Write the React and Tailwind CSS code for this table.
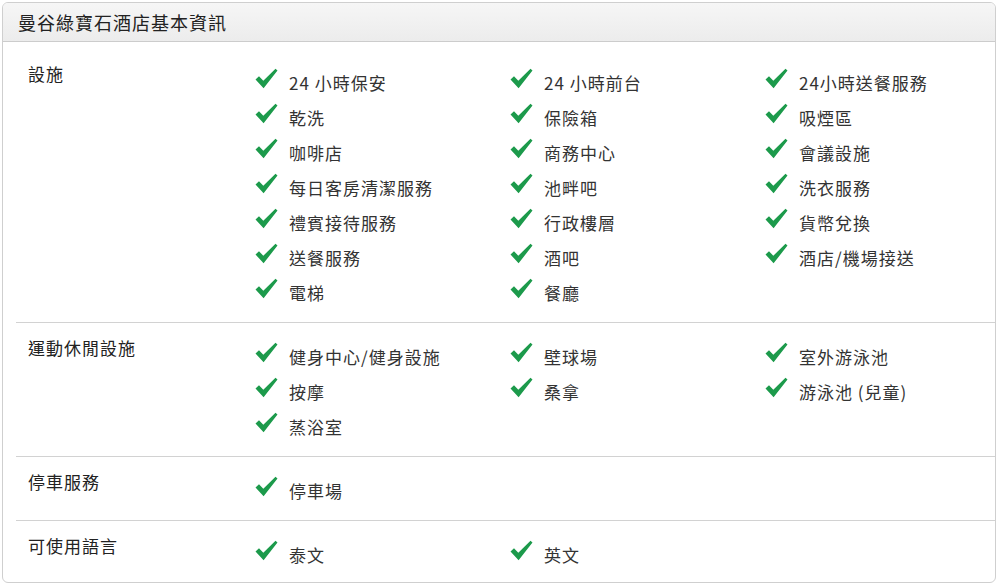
const sections = [
  {
    label: '設施',
    items: [
      '24 小時保安', '24 小時前台', '24小時送餐服務',
      '乾洗', '保險箱', '吸煙區',
      '咖啡店', '商務中心', '會議設施',
      '每日客房清潔服務', '池畔吧', '洗衣服務',
      '禮賓接待服務', '行政樓層', '貨幣兌換',
      '送餐服務', '酒吧', '酒店/機場接送',
      '電梯', '餐廳',
    ],
  },
  {
    label: '運動休閒設施',
    items: ['健身中心/健身設施', '壁球場', '室外游泳池', '按摩', '桑拿', '游泳池 (兒童)', '蒸浴室'],
  },
  { label: '停車服務', items: ['停車場'] },
  { label: '可使用語言', items: ['泰文', '英文'] },
];

function Check() {
  return (
    <svg width="23" height="21" viewBox="0 0 23 21" className="shrink-0 mb-[8px]">
      <path d="M0.5 11.5 L4 8.2 L8.3 12.8 L20.5 0.8 L22.5 2.6 L8.6 20.2 Z" fill="#1c9a4b" />
    </svg>
  );
}

export default function App() {
  return (
    <div
      className="w-[994px] m-[2px] border border-[#cfcfcf] rounded-[6px] bg-white overflow-hidden text-[#333]"
      style={{ fontFamily: '"Noto Sans CJK TC", "Liberation Sans", sans-serif' }}
    >
      <div className="h-[39px] flex items-center pl-[15px] bg-gradient-to-b from-[#f6f6f6] to-[#ececec] border-b border-[#cccccc]">
        <span className="text-[18px] tracking-[1px] text-[#222]">曼谷綠寶石酒店基本資訊</span>
      </div>
      <div className="pt-[7px] pl-[13px]">
        {sections.map((s, i) => (
          <div
            key={s.label}
            className={`flex pt-[16px] ${i < sections.length - 1 ? 'pb-[12px] border-b border-[#d2d2d2]' : 'pb-[10px]'}`}
          >
            <div className="w-[239px] shrink-0 pl-[12px] leading-[18px] text-[17px] tracking-[1px] text-[#222]">
              {s.label}
            </div>
            <div className="grid grid-cols-[255px_255px_230px]">
              {s.items.map((it) => (
                <div key={it} className="h-[35px] flex items-center gap-[11px]">
                  <Check />
                  <span className="text-[17px] tracking-[1px] leading-[20px] whitespace-nowrap">{it}</span>
                </div>
              ))}
            </div>
          </div>
        ))}
      </div>
    </div>
  );
}
